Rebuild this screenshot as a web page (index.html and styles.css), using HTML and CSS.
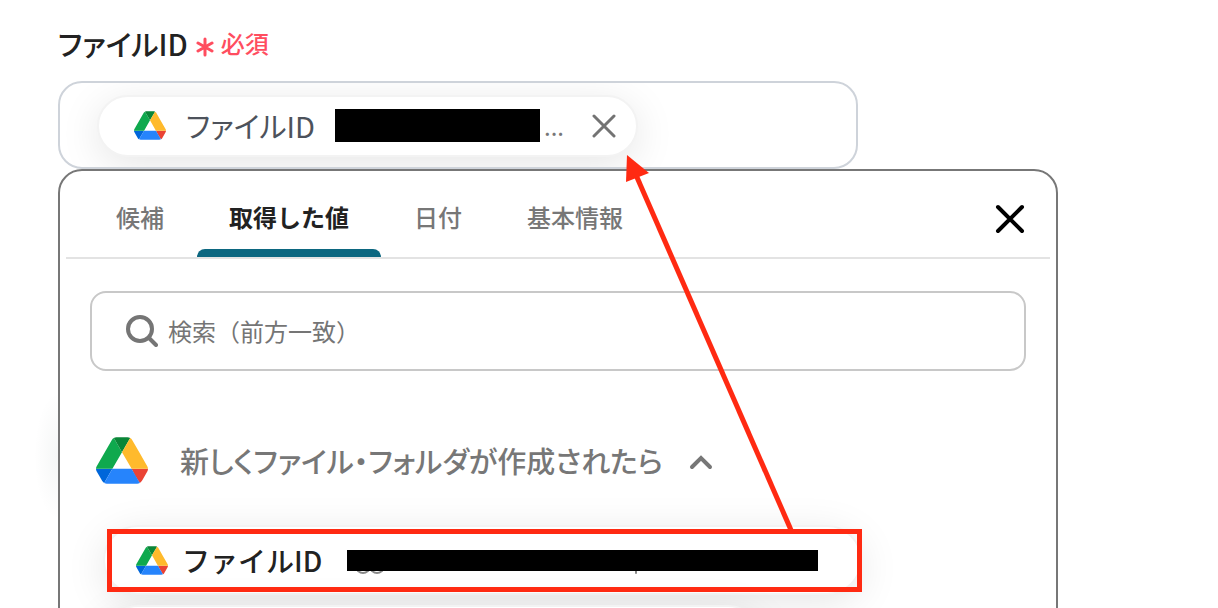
FILE: index.html
```html
<!DOCTYPE html>
<html lang="ja">
<head>
  <meta charset="UTF-8" />
  <meta name="viewport" content="width=device-width, initial-scale=1.0"/>
  <title>ファイルID</title>
  <link rel="stylesheet" href="styles.css">
</head>
<body>

<svg class="sprite" aria-hidden="true">
  <symbol id="drive" viewBox="0 0 87.3 78">
    <path fill="#0066da" d="m6.6 66.85 3.85 6.65c.8 1.4 1.95 2.5 3.3 3.3l13.75-23.8h-27.5c0 1.55.4 3.1 1.2 4.5z"/>
    <path fill="#0fa94e" d="m43.65 25-13.75-23.8c-1.35.8-2.5 1.9-3.3 3.3l-25.4 44a9.06 9.06 0 0 0 -1.2 4.5h27.5z"/>
    <path fill="#ea4335" d="m73.55 76.8c1.35-.8 2.5-1.9 3.3-3.3l1.6-2.75 7.65-13.25c.8-1.4 1.2-2.95 1.2-4.5h-27.502l5.852 11.5z"/>
    <path fill="#0a8537" d="m43.65 25 13.75-23.8c-1.35-.8-2.9-1.2-4.5-1.2h-18.5c-1.6 0-3.15.45-4.5 1.2z"/>
    <path fill="#2684fc" d="m59.8 53h-32.3l-13.75 23.8c1.35.8 2.9 1.2 4.5 1.2h50.8c1.6 0 3.15-.45 4.5-1.2z"/>
    <path fill="#ffba2c" d="m73.4 26.5-12.7-22c-.8-1.4-1.95-2.5-3.3-3.3l-13.75 23.8 16.15 28h27.45c0-1.55-.4-3.1-1.2-4.5z"/>
  </symbol>
</svg>

<main class="page">
  <div class="label-row">
    <h2 class="label">ファイルID</h2>
    <span class="required">
      <svg class="asterisk" viewBox="0 0 18 20"><path d="M9 2v16M2 6l14 8M16 6L2 14"/></svg>
      必須
    </span>
  </div>

  <div class="field">
    <div class="chip">
      <svg class="drive-small"><use href="#drive"/></svg>
      <span class="chip-name">ファイルID</span>
      <span class="mask chip-mask"></span>
      <span class="chip-more">...</span>
      <button class="icon-button" type="button" aria-label="削除">
        <svg class="chip-x" viewBox="0 0 24 24"><path d="M2 2l20 20M22 2L2 22"/></svg>
      </button>
    </div>
  </div>

  <section class="panel">
    <div class="panel-head">
      <div class="tabs" role="tablist">
        <button class="tab" type="button" role="tab">候補</button>
        <button class="tab active" type="button" role="tab" aria-selected="true">取得した値</button>
        <button class="tab" type="button" role="tab">日付</button>
        <button class="tab" type="button" role="tab">基本情報</button>
      </div>
      <button class="icon-button" type="button" aria-label="閉じる">
        <svg class="panel-x" viewBox="0 0 30 30"><path d="M3 3l24 24M27 3L3 27"/></svg>
      </button>
    </div>

    <div class="panel-body">
      <label class="search">
        <svg class="search-icon" viewBox="0 0 32 32"><circle cx="14" cy="14" r="12"/><path d="M23 23l7 7"/></svg>
        <input class="search-input" type="text" placeholder="検索（前方一致）" aria-label="検索">
      </label>

      <button class="group" type="button" aria-expanded="true">
        <svg class="drive-large"><use href="#drive"/></svg>
        <span class="group-name">新しくファイル・フォルダが作成されたら</span>
        <svg class="chevron" viewBox="0 0 24 16"><path d="M3 13l9-9 9 9"/></svg>
      </button>

      <div class="items">
        <button class="item" type="button">
          <svg class="drive-small"><use href="#drive"/></svg>
          <span class="item-name">ファイルID</span>
          <span class="mask item-mask">
            <svg class="tails" viewBox="0 0 300 4"><path d="M11 0q5 4 10 0M25 0q5 4 10 0M289 0v2"/></svg>
          </span>
          <span class="marker"></span>
        </button>
        <button class="item item-next" type="button" aria-label="次の項目"></button>
      </div>
    </div>
  </section>

  <svg class="arrow" viewBox="0 0 180 380" aria-hidden="true">
    <path d="M25 22L180 377"/>
    <polygon points="16,2 38,20 15,29"/>
  </svg>
</main>

</body>
</html>
```
FILE: styles.css
```css
* { box-sizing: border-box; }

body {
  margin: 0;
  background: #fff;
  color: #222;
  font-family: "Noto Sans CJK JP", sans-serif;
}

button {
  padding: 0;
  border: none;
  background: none;
  color: inherit;
  font-family: inherit;
  cursor: pointer;
}

svg {
  display: block;
  flex: none;
  fill: none;
  stroke-linecap: round;
}

.sprite {
  position: absolute;
  width: 0;
  height: 0;
}

.page {
  position: relative;
  height: 100vh;
  overflow: hidden;
  padding: 23px 58px 0;
}

.label-row {
  display: flex;
  align-items: center;
  gap: 8px;
  height: 40px;
  margin-bottom: 18px;
}

.label {
  margin: 0;
  font-size: 29px;
  font-weight: 500;
  line-height: 40px;
  font-feature-settings: "palt";
}

.required {
  display: flex;
  align-items: center;
  gap: 7px;
  color: #ff4d5f;
  font-size: 24px;
  font-weight: 500;
  line-height: 40px;
}

.asterisk {
  width: 18px;
  height: 20px;
  margin-top: 8px;
  stroke: #ff4d5f;
  stroke-width: 3;
}

.field {
  display: flex;
  max-width: 800px;
  height: 88px;
  padding: 12px 37px;
  border: 2px solid #ced3da;
  border-radius: 24px;
  overflow: hidden;
}

.chip {
  display: flex;
  align-items: center;
  height: 62px;
  padding: 0 20px 2px 35px;
  border: 2px solid #f3f3f3;
  border-radius: 31px;
  background: #fff;
  box-shadow: 0 8px 40px rgba(0, 0, 0, 0.1);
}

.drive-small {
  width: 32px;
  height: 29px;
}

.drive-large {
  width: 52px;
  height: 47px;
}

.chip-name {
  width: 130px;
  margin: 0 19px 0 20px;
  color: #4d525b;
  font-size: 29px;
  line-height: 40px;
  white-space: nowrap;
  font-feature-settings: "palt";
}

.mask {
  flex: none;
  background: #000;
}

.chip-mask {
  width: 205px;
  height: 33px;
}

.chip-more {
  width: 24px;
  margin: 0 24px 0 4px;
  color: #777;
  font-size: 24px;
}

.chip-x {
  width: 24px;
  height: 24px;
  margin-top: 2px;
  stroke: #737373;
  stroke-width: 3;
}

.panel {
  position: relative;
  max-width: 1000px;
  min-height: 480px;
  border: 2px solid #777;
  border-radius: 24px;
  background: #fff;
}

/* faint glow beside the panel */
.panel::before {
  content: "";
  position: absolute;
  top: 220px;
  left: -26px;
  width: 24px;
  height: 130px;
  background: radial-gradient(ellipse at right, rgba(0, 40, 30, 0.04), transparent 70%);
}

.panel-head {
  display: flex;
  align-items: center;
  justify-content: space-between;
  height: 88px;
  margin: 0 6px;
  padding: 0 25px 0 18px;
  border-bottom: 2px solid #e3e3e3;
}

.panel-x {
  width: 30px;
  height: 30px;
  margin-top: 10px;
  stroke: #000;
  stroke-width: 4;
}

.tabs {
  display: flex;
  gap: 1px;
  height: 86px;
}

.tab {
  padding: 4px 32px 0;
  color: #777;
  font-size: 24px;
  font-weight: 500;
}

.tab.active {
  position: relative;
  color: #222;
  font-weight: 700;
}

.tab.active::after {
  content: "";
  position: absolute;
  right: 0;
  bottom: 0;
  left: 0;
  height: 8px;
  border-radius: 8px 8px 0 0;
  background: #0c6780;
}

.panel-body {
  padding: 32px 30px;
}

.search {
  display: flex;
  align-items: center;
  gap: 10px;
  height: 80px;
  padding: 0 34px;
  border: 2px solid #c8c8c8;
  border-radius: 16px;
}

.search-icon {
  width: 32px;
  height: 32px;
  stroke: #757575;
  stroke-width: 4;
}

.search-input {
  flex: 1;
  padding: 0 0 2px;
  border: none;
  outline: none;
  background: none;
  font-family: inherit;
  font-size: 24px;
}

.search-input::placeholder {
  color: #757575;
  opacity: 1;
}

.group {
  display: flex;
  align-items: center;
  height: 72px;
  margin: 53px 0 29px;
  padding-left: 6px;
}

.group-name {
  margin: 0 26px 0 32px;
  color: #777;
  font-size: 29px;
  font-weight: 500;
  line-height: 40px;
  white-space: nowrap;
  font-feature-settings: "palt";
}

.chevron {
  width: 24px;
  height: 16px;
  margin-top: 4px;
  stroke: #777;
  stroke-width: 4;
}

.items {
  display: flex;
  flex-direction: column;
  align-items: flex-start;
  gap: 10px;
  padding-left: 13px;
}

.item {
  position: relative;
  display: flex;
  align-items: center;
  height: 70px;
  padding: 0 42px 0 31px;
  border: 2px solid #f3f3f3;
  border-radius: 35px;
  background: #fff;
  box-shadow: 0 8px 40px rgba(0, 0, 0, 0.1);
}

.item-next {
  width: 660px;
}

.item-name {
  width: 140px;
  margin: 0 25px 0 14px;
  font-size: 28px;
  font-weight: 500;
  line-height: 40px;
  text-align: left;
  white-space: nowrap;
}

.item-mask {
  width: 471px;
  height: 21px;
}

.tails {
  width: 300px;
  height: 4px;
  margin-top: 21px;
  stroke: #888;
  stroke-width: 2;
}

/* red frame round the chosen item */
.marker {
  position: absolute;
  top: 2px;
  right: -2px;
  bottom: 1px;
  left: 2px;
  z-index: 1;
  border: 5px solid #ff2a12;
}

.arrow {
  position: absolute;
  top: 153px;
  left: 611px;
  width: 180px;
  height: 380px;
  overflow: visible;
}

.arrow path {
  stroke: #ff2a12;
  stroke-width: 5;
  stroke-linecap: butt;
}

.arrow polygon {
  fill: #ff2a12;
}
```
